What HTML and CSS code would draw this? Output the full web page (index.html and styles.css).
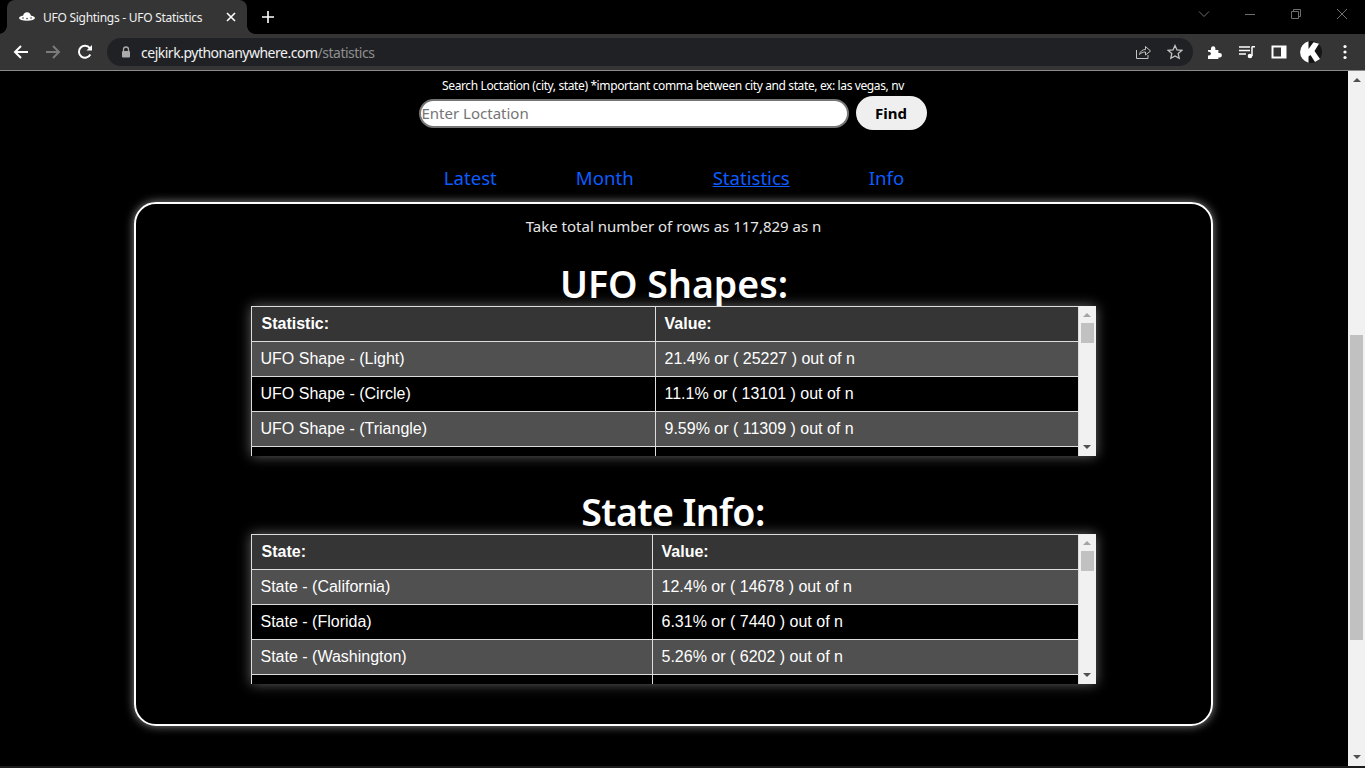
FILE: index.html
```html
<!DOCTYPE html>
<html lang="en">
<head>
<meta charset="utf-8">
<title>UFO Sightings - UFO Statistics</title>
<link rel="stylesheet" href="styles.css">
</head>
<body>
<header class="browser">
  <div class="tabstrip">
    <div class="tab">
      <svg class="favicon" viewBox="0 0 16 16" width="16" height="16"><ellipse cx="8" cy="9" rx="8" ry="2.800" fill="#fff"/><path d="M4 7.500C4.300 4.500 6 3.200 8 3.200s3.700 1.300 4 4.300z" fill="#fff"/><circle cx="4" cy="9" r=".8" fill="#353535"/><circle cx="8" cy="9.600" r=".8" fill="#353535"/><circle cx="12" cy="9" r=".8" fill="#353535"/></svg>
      <span class="tab-title">UFO Sightings - UFO Statistics</span>
      <svg class="tab-close" viewBox="0 0 10 10" width="10" height="10"><path d="M1 1l8 8M9 1l-8 8" stroke="#fff" stroke-width="1.600" fill="none"/></svg>
    </div>
    <svg class="new-tab" viewBox="0 0 12 12" width="12" height="12"><path d="M6 0v12M0 6h12" stroke="#fff" stroke-width="1.600" fill="none"/></svg>
    <div class="win-controls">
      <svg viewBox="0 0 12 12" width="12" height="12"><path d="M1 3.500l5 5 5-5" stroke="#6f6f6f" fill="none"/></svg>
      <svg viewBox="0 0 12 12" width="12" height="12"><path d="M1 6.500h10" stroke="#6f6f6f" fill="none"/></svg>
      <svg viewBox="0 0 12 12" width="12" height="12"><path d="M1.500 3.500h7v7h-7zM3.500 3.500v-2h7v7h-2" stroke="#6f6f6f" fill="none"/></svg>
      <svg viewBox="0 0 12 12" width="12" height="12"><path d="M1 1l10 10M11 1l-10 10" stroke="#6f6f6f" fill="none"/></svg>
    </div>
  </div>
  <div class="toolbar">
    <svg class="nav-icon" viewBox="0 0 16 16" width="16" height="16"><path d="M15 8H2M8 2L2 8l6 6" stroke="#fff" stroke-width="2" fill="none"/></svg>
    <svg class="nav-icon" viewBox="0 0 16 16" width="16" height="16"><path d="M1 8h13M8 2l6 6-6 6" stroke="#7b7b7b" stroke-width="2" fill="none"/></svg>
    <svg class="nav-icon" viewBox="0 0 16 16" width="16" height="16"><path d="M13.300 10.500A6 6 0 1 1 12.800 4.200" stroke="#fff" stroke-width="2" fill="none"/><path d="M9.500 6.500H15V1z" fill="#fff"/></svg>
    <div class="omnibox">
      <svg class="lock" viewBox="0 0 10 12" width="10" height="12"><path d="M2.500 5V3.500a2.500 2.500 0 0 1 5 0V5" stroke="#aaa" stroke-width="1.300" fill="none"/><rect x="1" y="5" width="8" height="6.500" rx="1" fill="#aaa"/></svg>
      <span class="url">cejkirk.pythonanywhere.com<span class="url-path">/statistics</span></span>
      <svg class="omni-share" viewBox="0 0 16 16" width="16" height="16"><path d="M1.500 6v8.500h11.500V11" stroke="#c4c4c4" fill="none"/><path d="M4.500 10.500C5 7 8 5.500 10.500 5.500V2.500l5 4.500-5 4v-3C8 8 6 8.800 4.500 10.500z" stroke="#c4c4c4" fill="none"/></svg>
      <svg class="omni-star" viewBox="0 0 16 16" width="16" height="16"><path d="M8 1.500l2 4.400 4.800.5-3.600 3.200 1 4.700L8 11.900 3.800 14.300l1-4.700L1.200 6.400 6 5.900z" stroke="#c4c4c4" stroke-width="1.300" fill="none"/></svg>
    </div>
    <div class="ext-icons">
      <svg viewBox="0 0 16 16" width="16" height="16"><path d="M1 6h3V4.500a2.200 2.200 0 0 1 4.400 0V6h3v3h1.300a2.200 2.200 0 0 1 0 4.400h-1.300V15H1v-3.500h1a1.900 1.900 0 0 0 0-3.800H1z" fill="#fff"/></svg>
      <svg viewBox="0 0 16 16" width="16" height="16"><path d="M0 3h11M0 6.500h11M0 10h7" stroke="#fff" stroke-width="1.300" fill="none"/><path d="M13 2.500V12" stroke="#fff" stroke-width="1.500" fill="none"/><path d="M13 2h3v1.500h-3z" fill="#fff"/><circle cx="11" cy="12" r="2.300" fill="#fff"/></svg>
      <svg viewBox="0 0 16 16" width="16" height="16"><path d="M1.500 2.500h13v11h-13z" stroke="#fff" stroke-width="2" fill="none"/><path d="M10 2.500h4.500v11H10z" fill="#fff"/></svg>
      <svg class="avatar" viewBox="0 0 22 22" width="22" height="22"><circle cx="11" cy="11" r="11" fill="#151515"/><path d="M8.500 .3V8L13.500 1.200 19 2.800 14.500 10 20 18 15 21 10.500 14 8.500 15.500V21.700A11 11 0 0 1 8.500 .3z" fill="#fff"/></svg>
      <svg viewBox="0 0 4 16" width="4" height="16"><circle cx="2" cy="2.500" r="1.600" fill="#fff"/><circle cx="2" cy="8" r="1.600" fill="#fff"/><circle cx="2" cy="13.500" r="1.600" fill="#fff"/></svg>
    </div>
  </div>
</header>

<div class="viewport">
  <main class="page">
    <p class="search-label">Search Loctation (city, state) *important comma between city and state, ex: las vegas, nv</p>
    <form class="search">
      <input class="search-input" type="text" placeholder="Enter Loctation">
      <button class="find" type="button">Find</button>
    </form>
    <nav class="links">
      <a href="#">Latest</a>
      <a href="#">Month</a>
      <a href="#" class="current">Statistics</a>
      <a href="#">Info</a>
    </nav>
    <section class="panel">
      <p class="intro">Take total number of rows as 117,829 as n</p>
      <h1 class="heading heading-first">UFO Shapes:</h1>
      <div class="scrollbox">
        <table class="data shapes">
          <tr><th>Statistic:</th><th>Value:</th></tr>
          <tr class="odd"><td>UFO Shape - (Light)</td><td>21.4% or ( 25227 ) out of n</td></tr>
          <tr><td>UFO Shape - (Circle)</td><td>11.1% or ( 13101 ) out of n</td></tr>
          <tr class="odd"><td>UFO Shape - (Triangle)</td><td>9.59% or ( 11309 ) out of n</td></tr>
          <tr><td>&nbsp;</td><td>&nbsp;</td></tr>
        </table>
        <div class="bar"><span class="arrow up"></span><span class="thumb"></span><span class="arrow down"></span></div>
      </div>
      <h1 class="heading heading-state">State Info:</h1>
      <div class="scrollbox">
        <table class="data states">
          <tr><th>State:</th><th>Value:</th></tr>
          <tr class="odd"><td>State - (California)</td><td>12.4% or ( 14678 ) out of n</td></tr>
          <tr><td>State - (Florida)</td><td>6.31% or ( 7440 ) out of n</td></tr>
          <tr class="odd"><td>State - (Washington)</td><td>5.26% or ( 6202 ) out of n</td></tr>
          <tr><td>&nbsp;</td><td>&nbsp;</td></tr>
        </table>
        <div class="bar"><span class="arrow up"></span><span class="thumb"></span><span class="arrow down"></span></div>
      </div>
    </section>
  </main>
  <div class="page-bar"><span class="arrow up dark"></span><span class="page-track"><span class="page-thumb"></span></span><span class="arrow down"></span></div>
</div>
</body>
</html>
```

FILE: styles.css
```css
* { box-sizing: border-box; }
html, body { margin: 0; height: 768px; overflow: hidden; background: #000; }
body { display: flex; flex-direction: column; font-family: "Noto Sans", sans-serif; color: #fff; }

.browser { flex: none; height: 71px; display: flex; flex-direction: column; background: #000; font-family: "Noto Sans", sans-serif; }
.tabstrip { height: 34px; display: flex; align-items: center; padding-left: 7px; }
.tab { position: relative; width: 240px; height: 34px; background: #353535; border-radius: 8px 8px 0 0; display: flex; align-items: center; padding: 0 11px 0 12px; }
.tab::before, .tab::after { content: ""; position: absolute; bottom: 0; width: 8px; height: 8px; }
.tab::before { left: -8px; background: radial-gradient(circle at 0 0, transparent 7.500px, #353535 8px); }
.tab::after { right: -8px; background: radial-gradient(circle at 100% 0, transparent 7.500px, #353535 8px); }
.favicon { flex: none; }
.tab-title { flex: 1; margin-left: 8px; font-size: 12px; letter-spacing: -.27px; color: #f0f0f0; white-space: nowrap; }
.tab-close { flex: none; }
.new-tab { margin-left: 15px; }
.win-controls { margin-left: auto; display: flex; align-items: center; gap: 34px; padding-right: 17px; margin-top: -6px; }
.toolbar { height: 37px; background: #353535; border-bottom: 1px solid #8a8a8a; display: flex; align-items: center; padding-left: 13px; }
.nav-icon { flex: none; margin-right: 16px; }
.omnibox { width: 1086px; height: 28px; margin-left: -2px; background: #202124; border-radius: 14px; display: flex; align-items: center; padding: 0 10px 0 14px; }
.lock { flex: none; }
.url { flex: 1; margin-left: 10px; font-size: 14px; letter-spacing: -.49px; color: #f1f1f1; white-space: nowrap; }
.url-path { color: #8f8f8f; }
.omni-share { margin-right: 16px; }
.ext-icons { flex: 1; display: flex; align-items: center; gap: 16px; padding-left: 14px; }
.avatar { margin: 0 5px 0 -3px; }

.viewport { flex: 1; min-height: 0; display: flex; border-bottom: 2px solid #1c1c1c; }
.page { flex: 1; min-width: 0; display: flex; flex-direction: column; align-items: center; padding: 7px 2px 0 0; }
.search-label { margin: 0; font-size: 12px; letter-spacing: -.38px; line-height: 16px; color: #fff; }
.search { display: flex; align-items: center; gap: 7px; margin-top: 2px; margin-right: 1px; }
.search-input { width: 430px; height: 29px; border: 2px solid #767676; border-radius: 15px; padding: 0 1px; font: 15px "Noto Sans", sans-serif; background: #fff; outline: none; }
.search-input::placeholder { color: #757575; }
.find { width: 71px; height: 34px; border: 0; border-radius: 17px; background: #efefef; color: #000; font: 700 15px "Noto Sans", sans-serif; }
.links { display: flex; gap: 79px; margin: 35px 0 0 2px; font-size: 18.600px; line-height: 26px; }
.links a { color: #0d5cff; text-decoration: none; }
.links a.current { text-decoration: underline; }
.panel { width: 1079px; height: 524px; margin-top: 11px; border: 2px solid #fff; border-radius: 22px; box-shadow: 0 0 10px rgba(255,255,255,.55); display: flex; flex-direction: column; align-items: center; }
.intro { margin: 12px 0 0 1px; font-size: 15px; line-height: 20px; color: #e6e6e6; }
.heading { margin: 0; height: 47px; font-size: 37.500px; line-height: 50px; font-weight: 600; }
.heading-first { margin: 23px 0 0 2px; }
.heading-state { margin-top: 31px; letter-spacing: -.6px; }
.scrollbox { width: 845px; height: 150px; flex: none; overflow: hidden; display: flex; box-shadow: 0 0 12px rgba(255,255,255,.4); background: #000; }
.data { width: 828px; height: 176px; border-collapse: collapse; table-layout: fixed; font-family: "Liberation Sans", sans-serif; font-size: 16px; }
.data th, .data td { height: 35px; border: 1px solid #ddd; padding: 0 9px; text-align: left; color: #fff; white-space: nowrap; }
.data tr:first-child > * { background: #353535; }
.data th { font-weight: 700; }
.data th:first-child { padding-left: 10px; }
.data .odd td { background: #505050; }
.shapes th:first-child, .shapes td:first-child { width: 404px; }
.states th:first-child, .states td:first-child { width: 401px; }
.bar { width: 17px; flex: none; height: 150px; background: #f1f1f1; display: flex; flex-direction: column; align-items: center; }
.thumb { width: 13px; height: 20px; background: #c1c1c1; margin-top: 6px; }
.arrow { width: 0; height: 0; border-left: 4px solid transparent; border-right: 4px solid transparent; flex: none; }
.arrow.up { border-bottom: 4px solid #a3a3a3; margin-top: 7px; }
.arrow.up.dark { border-bottom-color: #505050; }
.arrow.down { border-top: 4px solid #505050; margin-top: auto; margin-bottom: 7px; }
.page-bar { width: 17px; flex: none; background: #f1f1f1; display: flex; flex-direction: column; align-items: center; }
.page-track { flex: 1; width: 100%; display: flex; flex-direction: column; align-items: center; padding-top: 253px; }
.page-thumb { width: 13px; height: 305px; background: #c1c1c1; }
.page-bar .arrow.down { margin-top: 6px; }
```
